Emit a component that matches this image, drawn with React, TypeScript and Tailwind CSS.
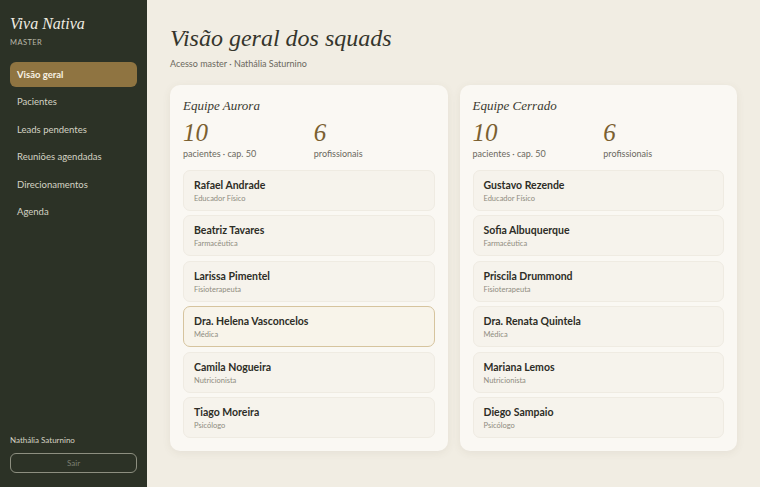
import { useState } from 'react';

type Member = { name: string; role: string; highlight?: boolean };
type Squad = { name: string; patients: number; capacity: number; members: Member[] };

const squads: Squad[] = [
  {
    name: 'Equipe Aurora',
    patients: 10,
    capacity: 50,
    members: [
      { name: 'Rafael Andrade', role: 'Educador Físico' },
      { name: 'Beatriz Tavares', role: 'Farmacêutica' },
      { name: 'Larissa Pimentel', role: 'Fisioterapeuta' },
      { name: 'Dra. Helena Vasconcelos', role: 'Médica', highlight: true },
      { name: 'Camila Nogueira', role: 'Nutricionista' },
      { name: 'Tiago Moreira', role: 'Psicólogo' },
    ],
  },
  {
    name: 'Equipe Cerrado',
    patients: 10,
    capacity: 50,
    members: [
      { name: 'Gustavo Rezende', role: 'Educador Físico' },
      { name: 'Sofia Albuquerque', role: 'Farmacêutica' },
      { name: 'Priscila Drummond', role: 'Fisioterapeuta' },
      { name: 'Dra. Renata Quintela', role: 'Médica' },
      { name: 'Mariana Lemos', role: 'Nutricionista' },
      { name: 'Diego Sampaio', role: 'Psicólogo' },
    ],
  },
];

const navItems = ['Visão geral', 'Pacientes', 'Leads pendentes', 'Reuniões agendadas', 'Direcionamentos', 'Agenda'];

const sans = "font-['Lato','Inter',sans-serif]";
const serif = "font-['Liberation_Serif','DejaVu_Serif',serif]";

function SquadCard({ squad }: { squad: Squad }) {
  return (
    <div className="flex-1 rounded-[10px] bg-[#faf8f3] px-[13px] pt-[13px] pb-[13px] shadow-[0_2px_8px_rgba(90,80,50,0.08)]">
      <h2 className={`${serif} text-[13px] italic leading-[16px] text-[#3a3a30]`}>{squad.name}</h2>
      <div className="mt-[6px] grid grid-cols-2 gap-[10px]">
        <div>
          <div className={`${serif} text-[25px] italic leading-[26px] text-[#7a6030]`}>{squad.patients}</div>
          <div className="mt-[2px] text-[9px] leading-[12px] text-[#6b685e]">
            pacientes · cap. {squad.capacity}
          </div>
        </div>
        <div>
          <div className={`${serif} text-[25px] italic leading-[26px] text-[#7a6030]`}>{squad.members.length}</div>
          <div className="mt-[2px] text-[9px] leading-[12px] text-[#6b685e]">profissionais</div>
        </div>
      </div>
      <div className="mt-[10px] flex flex-col gap-[4.6px]">
        {squad.members.map((m) => (
          <div
            key={m.name}
            className={`h-[41px] rounded-[7px] border px-[10px] pt-[7px] ${
              m.highlight ? 'border-[#d6c49e] bg-[#f8f4ea]' : 'border-[#efebe2] bg-[#f6f3ec]'
            }`}
          >
            <div className="text-[10.5px] font-bold leading-[14px] text-[#2d2d26]">{m.name}</div>
            <div className="mt-[2px] text-[7.5px] leading-[10px] text-[#8f8c80]">{m.role}</div>
          </div>
        ))}
      </div>
    </div>
  );
}

export default function App() {
  const [active, setActive] = useState('Visão geral');

  return (
    <div className={`${sans} flex h-[487px] w-[760px] overflow-hidden bg-[#f1ede3]`}>
      {/* Sidebar */}
      <aside className="flex w-[147px] shrink-0 flex-col bg-[#2c3226] px-[10px] pt-[14px] pb-[14px]">
        <div className={`${serif} text-[16px] italic leading-[20px] text-[#f1ede3]`}>Viva Nativa</div>
        <div className="mt-[3px] text-[7.5px] tracking-[0.06em] text-[#b9b8a8]">MASTER</div>
        <nav className="mt-[14px] flex flex-col gap-[2.5px]">
          {navItems.map((item) => (
            <button
              key={item}
              type="button"
              onClick={() => setActive(item)}
              className={`h-[25px] rounded-[6px] px-[7px] text-left text-[9.5px] ${
                active === item ? 'bg-[#8f7441] font-bold text-[#f7f1e4]' : 'text-[#d4d3c4]'
              }`}
            >
              {item}
            </button>
          ))}
        </nav>
        <div className="mt-auto">
          <div className="text-[8px] text-[#d4d3c4]">Nathália Saturnino</div>
          <button
            type="button"
            className="mt-[7px] h-[20px] w-full rounded-[6px] border border-[#8d8f80] text-[8px] text-[#7e8072]"
          >
            Sair
          </button>
        </div>
      </aside>

      {/* Main */}
      <main className="flex flex-1 flex-col px-[23px] pt-[23px] pb-[35px]">
        <h1 className={`${serif} text-[24px] italic leading-[30px] text-[#35352c]`}>Visão geral dos squads</h1>
        <p className="mt-[4px] text-[9px] text-[#6b685e]">Acesso master · Nathália Saturnino</p>
        <div className="mt-[14px] flex gap-[12px]">
          {squads.map((s) => (
            <SquadCard key={s.name} squad={s} />
          ))}
        </div>
      </main>
    </div>
  );
}
